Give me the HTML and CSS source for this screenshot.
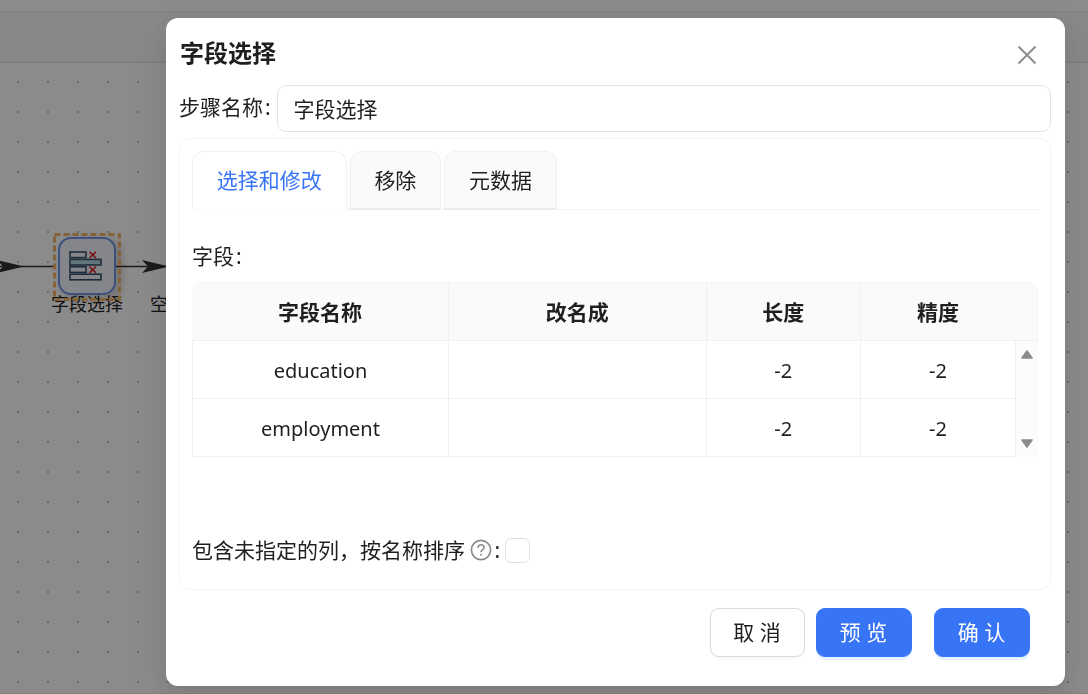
FILE: index.html
```html
<!DOCTYPE html>
<html lang="zh-CN">
  <head>
    <meta charset="UTF-8" />
    <meta name="viewport" content="width=device-width, initial-scale=1.0" />
    <title>字段选择</title>
    <link rel="stylesheet" href="styles.css">
  </head>
  <body>
    <!-- 画布 -->
    <div class="page">
      <div class="page__top"></div>
      <div class="page__toolbar"></div>
      <div class="canvas">
        <svg class="canvas__edges" width="180" height="24" viewBox="0 0 180 24">
          <path d="M0 12.5H56M116 12.5H166" stroke="#303030" stroke-width="1.6" />
          <path d="M-3 6L24 12.5L-3 19L3 12.5ZM142 6L169 12.5L142 19L148 12.5Z" fill="#303030" />
        </svg>
        <span class="node__label">字段选择</span>
        <span class="node__label node__label--next">空操作</span>
        <div class="node">
          <svg class="node__icon" width="34" height="30" viewBox="0 0 34 30" fill="none" stroke="#35506a" stroke-width="1.6">
            <rect x="1" y="1" width="16" height="5.6" />
            <rect x="1" y="8.4" width="31" height="5.6" fill="#b9d6e4" />
            <rect x="1" y="15.8" width="16" height="5.6" />
            <rect x="1" y="23.2" width="31" height="5.6" />
            <path d="M20.5 .8L27 7M27 .8L20.5 7M20.5 15.6L27 21.8M27 15.6L20.5 21.8" stroke="#d8232a" />
          </svg>
          <svg class="node__select" width="68" height="68" viewBox="0 0 68 68">
            <rect x="1.5" y="1.5" width="65" height="65" fill="none" stroke="#f2b266" stroke-width="3" stroke-dasharray="6 3" />
          </svg>
        </div>
      </div>
    </div>

    <!-- 弹窗 -->
    <div class="mask">
      <div class="modal">
        <div class="modal__header">
          <h3 class="modal__title">字段选择</h3>
          <svg class="modal__close" width="20" height="20" viewBox="0 0 20 20">
            <path d="M1.5 1.5L18.5 18.5M18.5 1.5L1.5 18.5" stroke="#8c8c8c" stroke-width="1.9" />
          </svg>
        </div>

        <div class="step">
          <label class="step__label" for="stepName">步骤名称<span class="colon">:</span></label>
          <input class="step__input" id="stepName" type="text" value="字段选择" />
        </div>

        <div class="panel">
          <div class="tabs">
            <div class="tabs__item tabs__item--active">选择和修改</div>
            <div class="tabs__item">移除</div>
            <div class="tabs__item">元数据</div>
          </div>

          <div class="panel__label">字段<span class="colon">:</span></div>

          <div class="table">
            <div class="table__row table__row--head">
              <div class="table__cell">字段名称</div>
              <div class="table__cell">改名成</div>
              <div class="table__cell">长度</div>
              <div class="table__cell">精度</div>
              <div class="table__gutter"></div>
            </div>
            <div class="table__content">
              <div class="table__body">
                <div class="table__row">
                  <div class="table__cell">education</div>
                  <div class="table__cell"></div>
                  <div class="table__cell">-2</div>
                  <div class="table__cell">-2</div>
                </div>
                <div class="table__row">
                  <div class="table__cell">employment</div>
                  <div class="table__cell"></div>
                  <div class="table__cell">-2</div>
                  <div class="table__cell">-2</div>
                </div>
              </div>
              <div class="table__scrollbar">
                <svg width="12" height="9" viewBox="0 0 12 9"><path d="M6 1L11 8H1Z" fill="#8b8b8b" stroke="#8b8b8b" stroke-width="1.6" stroke-linejoin="round" /></svg>
                <svg width="12" height="9" viewBox="0 0 12 9"><path d="M6 8L11 1H1Z" fill="#8b8b8b" stroke="#8b8b8b" stroke-width="1.6" stroke-linejoin="round" /></svg>
              </div>
            </div>
          </div>

          <div class="option">
            <span class="option__text">包含未指定的列，按名称排序</span>
            <svg class="option__help" width="22" height="22" viewBox="0 0 22 22" fill="none" stroke="#8c8c8c">
              <circle cx="11" cy="11" r="9.6" stroke-width="1.7" />
              <path d="M7.9 8.8C7.9 6.9 9.2 5.8 11 5.8S14.1 6.9 14.1 8.6C14.1 10.7 11 10.7 11 13.2" stroke-width="1.6" />
              <circle cx="11" cy="15.8" r="1" fill="#8c8c8c" stroke="none" />
            </svg>
            <span class="option__colon">:</span>
            <span class="option__checkbox"></span>
          </div>
        </div>

        <div class="modal__footer">
          <button class="btn">取 消</button>
          <button class="btn btn--primary">预 览</button>
          <button class="btn btn--primary btn--confirm">确 认</button>
        </div>
      </div>
    </div>
  </body>
</html>
```
FILE: styles.css
```css
* {
  box-sizing: border-box;
}

body {
  margin: 0;
  height: 694px;
  overflow: hidden;
  font-family: "Noto Sans", "Noto Sans CJK SC", sans-serif;
  font-size: 21px;
  line-height: 32px;
  color: #1f1f1f;
}

/* 画布 */
.page {
  display: flex;
  flex-direction: column;
  height: 694px;
  background-color: #fefefe;
}

.page__top {
  height: 12px;
  border-bottom: 1px solid #eaeaea;
}

.page__toolbar {
  height: 51px;
  background-color: #f4f9f7;
  border-bottom: 2px solid #e4e6e6;
}

.canvas {
  position: relative;
  flex: 1;
  background-image: conic-gradient(from 0deg at 2px 2px, transparent 0 270deg, #c2c2c2 270deg);
  background-size: 30px 30px;
  background-position: 17px 18px;
  border-bottom: 1px solid #ececec;
}

.canvas__edges {
  position: absolute;
  top: 191px;
  left: 0;
}

.node {
  position: absolute;
  top: 174px;
  left: 58px;
  width: 58px;
  height: 58px;
  display: flex;
  align-items: center;
  justify-content: center;
  background-color: #f3f5f9;
  border: 2px solid #6f92e6;
  border-radius: 13px;
  box-shadow: 5px 3px 9px 2px rgba(0, 0, 0, 0.16);
}

.node__icon {
  margin: 0 2px 1px 0;
}

/* 选中框 */
.node__select {
  position: absolute;
  top: -6px;
  left: -7px;
}

.node__label {
  position: absolute;
  top: 229px;
  left: 51px;
  font-size: 18px;
  line-height: 24px;
  white-space: nowrap;
}

.node__label--next {
  left: 150px;
}

/* 弹窗 */
.mask {
  position: fixed;
  inset: 0;
  display: flex;
  justify-content: center;
  align-items: flex-start;
  padding: 18px 23px 0 166px;
  background-color: rgba(0, 0, 0, 0.45);
}

.modal {
  width: 100%;
  height: 668px;
  padding: 14px 14px 0 13px;
  background-color: #fff;
  border-radius: 12px;
  box-shadow: 0 9px 24px rgba(0, 0, 0, 0.08), 0 4px 9px -6px rgba(0, 0, 0, 0.12), 0 14px 42px 12px rgba(0, 0, 0, 0.05);
}

.modal__header {
  display: flex;
  justify-content: space-between;
  align-items: center;
  height: 45px;
  padding: 0 14.5px 0 1px;
}

.modal__title {
  margin: 0 0 3px;
  font-size: 24px;
  font-weight: 700;
}

.colon {
  margin-left: 2px;
}

.step {
  display: flex;
  align-items: center;
  height: 47px;
  margin-top: 7.5px;
}

.step__label {
  width: 97.5px;
  flex: none;
  padding-bottom: 3px;
}

.step__input {
  flex: 1;
  height: 47px;
  padding: 0 16px 1px;
  border: 1.5px solid #e3e3e3;
  border-radius: 9px;
  font: inherit;
  color: inherit;
  outline: none;
}

.panel {
  height: 452px;
  margin-top: 6px;
  padding: 12px 11px 0 12px;
  border: 1px solid #f4f4f4;
  border-radius: 12px;
}

.tabs {
  display: flex;
  gap: 3px;
  height: 59px;
  border-bottom: 1px solid #f3f3f3;
}

.tabs__item {
  height: 59px;
  padding: 12.5px 24px 0 23.7px;
  background-color: #fafafa;
  border: 1px solid #f0f0f0;
  border-bottom: 2px solid #ebebeb;
  border-radius: 12px 12px 0 0;
}

.tabs__item--active {
  color: #3875f6;
  background-color: #fff;
  border-bottom: 1px solid #fafafa;
}

.panel__label {
  margin-top: 30px;
}

/* 字段表格 */
.table {
  width: 846px;
  margin-top: 10px;
  text-align: center;
}

.table__row {
  display: grid;
  grid-template-columns: 257px 257.5px 154.5px 155px;
  height: 58px;
}

.table__row--head {
  grid-template-columns: 257px 257.5px 154.5px 155px 1fr;
  height: 59px;
  font-weight: 700;
  background-color: #fafafa;
  border: 1px solid #f4f4f4;
  border-width: 1px 1px 0 0;
  border-radius: 12px 12px 0 0;
}

.table__cell {
  padding-top: 14px;
  border-right: 1px solid #f0f0f0;
  border-bottom: 1.5px solid #f0f0f0;
}

.table__row--head .table__cell {
  padding-top: 13px;
}

.table__row--head .table__cell:nth-child(4) {
  border-right-color: #fafafa;
}

.table__gutter {
  border-bottom: 1px solid #f0f0f0;
}

.table__content {
  display: flex;
}

.table__body {
  border-left: 1px solid #f0f0f0;
  width: 824px;
  font-size: 20px;
}

.table__body .table__row {
  grid-template-columns: 256px 257.5px 154.5px 155px;
}

.table__scrollbar {
  flex: 1;
  display: flex;
  flex-direction: column;
  align-items: center;
  justify-content: space-between;
  padding: 9px 0 9px;
  background-color: #fcfcfc;
}

.table__scrollbar svg {
  display: block;
}

.option {
  display: flex;
  align-items: center;
  margin-top: 77.5px;
}

.option__help {
  margin-left: 5px;
}

.option__colon {
  margin: 0 5px 0 2.5px;
}

.option__checkbox {
  width: 25px;
  height: 25px;
  border: 1.5px solid #e0e0e0;
  border-radius: 6px;
}

.modal__footer {
  display: flex;
  justify-content: flex-end;
  gap: 11px;
  padding: 18px 21.5px 0 0;
}

.btn {
  width: 95px;
  height: 49px;
  padding: 0 0 1px;
  font: inherit;
  color: inherit;
  background-color: #fff;
  border: 1px solid #dadada;
  border-radius: 9px;
  box-shadow: 0 3px 0 rgba(0, 0, 0, 0.02);
}

.btn--primary {
  width: 96px;
  color: #fff;
  background-color: #3875f6;
  border-color: #3875f6;
  box-shadow: 0 3px 0 rgba(5, 145, 255, 0.1);
}

.btn--confirm {
  margin-left: 11px;
}
```
